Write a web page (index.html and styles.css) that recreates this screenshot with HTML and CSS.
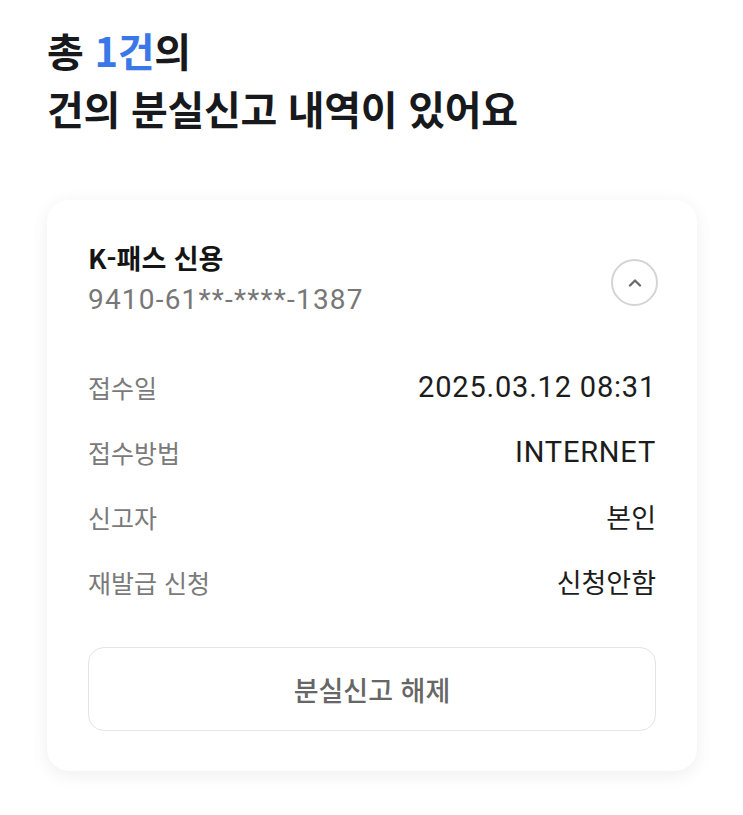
FILE: index.html
```html
<!DOCTYPE html>
<html lang="ko">
<head>
    <meta name="viewport" content="width=device-width, initial-scale=1">
    <link rel="stylesheet" href="styles.css">
</head>
<body>
    <h1 class="title">총 <span class="count">1건</span>의<br>건의 분실신고 내역이 있어요</h1>

    <div class="card">
        <div class="card-head">
            <div>
                <h2 class="card-name">K-패스 신용</h2>
                <p class="card-number">9410-61**-****-1387</p>
            </div>
            <button class="toggle" aria-label="접기">
                <svg width="14" height="9" viewBox="0 0 14 9">
                    <path d="M2 7.5 L7 2.5 L12 7.5" fill="none" stroke="#6b6b6b" stroke-width="2.4" stroke-linecap="round" stroke-linejoin="round"/>
                </svg>
            </button>
        </div>

        <dl class="info">
            <div class="row"><dt>접수일</dt><dd class="latin">2025.03.12 08:31</dd></div>
            <div class="row"><dt>접수방법</dt><dd class="latin">INTERNET</dd></div>
            <div class="row"><dt>신고자</dt><dd>본인</dd></div>
            <div class="row"><dt>재발급 신청</dt><dd>신청안함</dd></div>
        </dl>

        <button class="release">분실신고 해제</button>
    </div>
</body>
</html>
```

FILE: styles.css
```css
body {
    margin: 0;
    padding: 21px 46px 40px 47px;
    font-family: "Noto Sans CJK KR", "Noto Sans", sans-serif;
    background-color: #ffffff;
    color: #1a1a1a;
}

.title {
    margin: 0 0 63px 0;
    font-size: 40px;
    line-height: 58px;
    font-weight: 700;
    letter-spacing: -0.3px;
    color: #17191c;
}

.count {
    color: #3a78e8;
}

.card {
    background-color: #fff;
    border-radius: 22px;
    box-shadow: 0 4px 18px rgba(0, 0, 0, 0.07);
    padding: 40px 41px 40px 41px;
}

.card-head {
    display: flex;
    align-items: center;
    justify-content: space-between;
}

.card-name {
    margin: 0;
    font-size: 27px;
    line-height: 36px;
    font-weight: 700;
    color: #141414;
}

.card-number {
    margin: 6px 0 0 0;
    font-family: Roboto, "Noto Sans", sans-serif;
    font-size: 28px;
    line-height: 36px;
    color: #777;
    letter-spacing: 1.2px;
}

.toggle {
    width: 47px;
    height: 47px;
    margin: 6px -2px 0 0;
    border: 2px solid #d4d4d4;
    border-radius: 50%;
    background: #fff;
    display: flex;
    align-items: center;
    justify-content: center;
    padding: 0;
}

.info {
    margin: 52px 0 0 0;
    display: flex;
    flex-direction: column;
    gap: 31px;
}

.row {
    display: flex;
    justify-content: space-between;
    align-items: center;
    font-size: 25px;
    line-height: 34px;
}

.row dt {
    color: #7a7a7a;
}

.row dd {
    margin: 0;
    color: #1c1c1c;
    font-size: 27px;
}

.row dd.latin {
    font-family: Roboto, "Noto Sans", sans-serif;
    font-size: 29px;
    letter-spacing: 0.8px;
}

.release {
    display: block;
    width: 100%;
    height: 84px;
    margin-top: 48px;
    border: 1.5px solid #e4e4e4;
    border-radius: 16px;
    background: #fff;
    font-family: "Noto Sans CJK KR", sans-serif;
    font-size: 27px;
    font-weight: 500;
    color: #666;
}
```
